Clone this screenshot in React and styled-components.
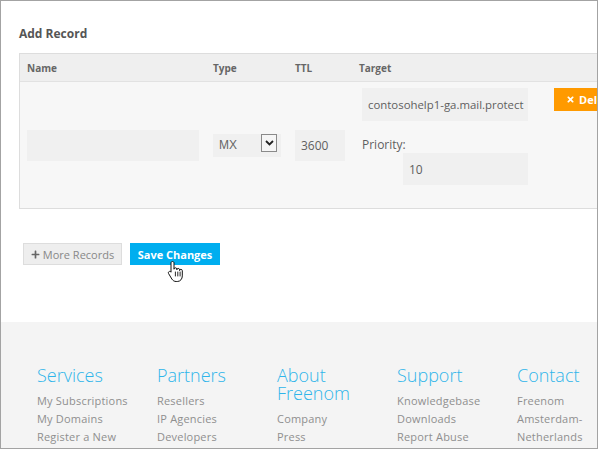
import React from 'react';
import styled, { createGlobalStyle } from 'styled-components';
import { FaTimes, FaPlus } from 'react-icons/fa';

const GlobalStyle = createGlobalStyle`
    html, body { margin: 0; padding: 0; background: #fff; }
    body { font-family: "Open Sans", "Liberation Sans", sans-serif; }
    * { box-sizing: border-box; }
`;

const footerCols = [
    { title: 'Services', links: ['My Subscriptions', 'My Domains', 'Register a New Domain'] },
    { title: 'Partners', links: ['Resellers', 'IP Agencies', 'Developers'] },
    { title: 'About Freenom', links: ['Company', 'Press', 'Careers'] },
    { title: 'Support', links: ['Knowledgebase', 'Downloads', 'Report Abuse'] },
    { title: 'Contact', links: ['Freenom', 'Amsterdam-Netherlands'] },
];

const HandCursor = () => (
    <Cursor width="17" height="22" viewBox="0 0 17 22">
        <path
            d="M5.5 1.5c.9 0 1.5.6 1.5 1.5v6.2c0-.8.6-1.4 1.4-1.4s1.4.6 1.4 1.4v.6c0-.8.6-1.4 1.4-1.4s1.4.6 1.4 1.4v.8c0-.8.6-1.3 1.3-1.3s1.4.6 1.4 1.4v5.2c0 3-1.9 5.6-5 5.6H9.2c-2 0-3.2-.9-4.3-2.4L1.6 13.6c-.5-.7-.3-1.6.4-2s1.5-.3 2 .3L4 12.2V3c0-.9.6-1.5 1.5-1.5z"
            fill="#fff"
            stroke="#111"
            strokeWidth="1"
            strokeLinejoin="round"
        />
        <path d="M8.4 12v4M10.8 12v4M13.1 12v4" stroke="#111" strokeWidth="0.9" strokeLinecap="round" />
    </Cursor>
);

export default function App() {
    return (
        <>
            <GlobalStyle />
            <Frame>
                <Main>
                    <Title>Add Record</Title>
                    <Table>
                        <HeadRow>
                            <HeadCell>Name</HeadCell>
                            <HeadCell>Type</HeadCell>
                            <HeadCell>TTL</HeadCell>
                            <HeadCell>Target</HeadCell>
                            <HeadCell />
                        </HeadRow>
                        <BodyRow>
                            <Cell $align="center">
                                <Input $w={172} $h={31} />
                            </Cell>
                            <Cell $align="center">
                                <Select>
                                    <span>MX</span>
                                    <SelectArrow>
                                        <svg width="9" height="6" viewBox="0 0 9 6">
                                            <path d="M1 1l3.5 3.5L8 1" fill="none" stroke="#222" strokeWidth="1.8" />
                                        </svg>
                                    </SelectArrow>
                                </Select>
                            </Cell>
                            <Cell $align="center">
                                <Input $w={50} $h={31}>3600</Input>
                            </Cell>
                            <TargetCell>
                                <Input $w={166} $h={33} $fs={11.4}>contosohelp1-ga.mail.protect</Input>
                                <Label>Priority:</Label>
                                <Input $w={125} $h={32} $indent={41}>10</Input>
                            </TargetCell>
                            <Cell $align="start">
                                <DeleteButton><FaTimes size={9} /> Delete</DeleteButton>
                            </Cell>
                        </BodyRow>
                    </Table>
                    <Actions>
                        <GreyButton><FaPlus size={9} /> More Records</GreyButton>
                        <BlueButton>
                            Save Changes
                            <HandCursor />
                        </BlueButton>
                    </Actions>
                </Main>
                <Footer>
                    {footerCols.map(col => (
                        <FooterCol key={col.title}>
                            <FooterTitle>{col.title}</FooterTitle>
                            {col.links.map(l => <FooterLink key={l}>{l}</FooterLink>)}
                        </FooterCol>
                    ))}
                </Footer>
            </Frame>
        </>
    );
}

const Frame = styled.div`
    width: 598px;
    height: 449px;
    border: 1px solid #a3a3a3;
    overflow: hidden;
    background: #fff;
`;

const Main = styled.div`
    padding: 25px 0 57px 18px;
`;

const Title = styled.h2`
    margin: 0 0 11px;
    font-size: 12px;
    line-height: 16px;
    font-weight: 700;
    color: #555;
`;

const Table = styled.div`
    width: 620px;
    border: 1px solid #ddd;
    border-right: none;
    background: #f7f7f7;
`;

const cols = '186px 82px 64px 195px auto';

const HeadRow = styled.div`
    display: grid;
    grid-template-columns: ${cols};
    height: 28px;
    padding-left: 7px;
    align-items: center;
    background: #efefef;
    border-bottom: 1px solid #e2e2e2;
`;

const HeadCell = styled.div`
    font-size: 10px;
    font-weight: 700;
    color: #666;
`;

const BodyRow = styled.div`
    display: grid;
    grid-template-columns: ${cols};
    height: 126px;
    padding-left: 7px;
`;

const Cell = styled.div`
    align-self: ${p => p.$align};
    padding-top: ${p => (p.$align === 'start' ? '5px' : '0')};
`;

const TargetCell = styled.div`
    display: flex;
    flex-direction: column;
    align-items: flex-start;
    padding: 6px 0 0 3px;
`;

const Input = styled.div`
    width: ${p => p.$w}px;
    height: ${p => p.$h}px;
    margin-left: ${p => p.$indent || 0}px;
    background: #f0f0f0;
    padding: 0 6px;
    display: flex;
    align-items: center;
    font-size: ${p => p.$fs || 12}px;
    color: #5f5f5f;
    white-space: nowrap;
    overflow: hidden;
`;

const Label = styled.div`
    margin-top: 15px;
    font-size: 12px;
    line-height: 17px;
    color: #5f5f5f;
`;

const Select = styled.div`
    width: 68px;
    height: 23px;
    background: #f0f0f0;
    display: flex;
    align-items: center;
    justify-content: space-between;
    padding: 0 4px 0 6px;
    font-family: "Liberation Sans", Arial, sans-serif;
    font-size: 12px;
    color: #666;
`;

const SelectArrow = styled.span`
    width: 16px;
    height: 18px;
    border: 1px solid #8a8a8a;
    background: #f6f6f6;
    display: flex;
    align-items: center;
    justify-content: center;
    margin-top: -4px;
`;

const DeleteButton = styled.div`
    display: inline-flex;
    align-items: center;
    gap: 4px;
    height: 23px;
    padding: 0 12px;
    background: #ff9a00;
    color: #fff;
    font-size: 11px;
    font-weight: 700;
    white-space: nowrap;
`;

const Actions = styled.div`
    display: flex;
    gap: 8px;
    margin: 34px 0 0 4px;
`;

const GreyButton = styled.div`
    display: flex;
    align-items: center;
    gap: 3px;
    height: 22px;
    width: 99px;
    justify-content: center;
    background: #eee;
    border: 1px solid #ddd;
    color: #888;
    font-size: 11px;
    svg { color: #666; }
`;

const BlueButton = styled.div`
    position: relative;
    display: flex;
    align-items: center;
    justify-content: center;
    height: 22px;
    width: 90px;
    background: #00aeef;
    color: #fff;
    font-size: 11px;
    font-weight: 700;
`;

const Cursor = styled.svg`
    position: absolute;
    left: 37px;
    top: 17px;
`;

const Footer = styled.div`
    display: flex;
    gap: 20px;
    height: 200px;
    padding: 44px 0 0 36px;
    background: #f4f4f4;
`;

const FooterCol = styled.div`
    width: 100px;
    flex-shrink: 0;
`;

const FooterTitle = styled.div`
    font-size: 18px;
    line-height: 18px;
    font-weight: 300;
    color: #2fb4ea;
    margin-bottom: 8px;
`;

const FooterLink = styled.div`
    font-size: 11px;
    line-height: 18px;
    color: #8f8f8f;
    letter-spacing: 0.2px;
`;
